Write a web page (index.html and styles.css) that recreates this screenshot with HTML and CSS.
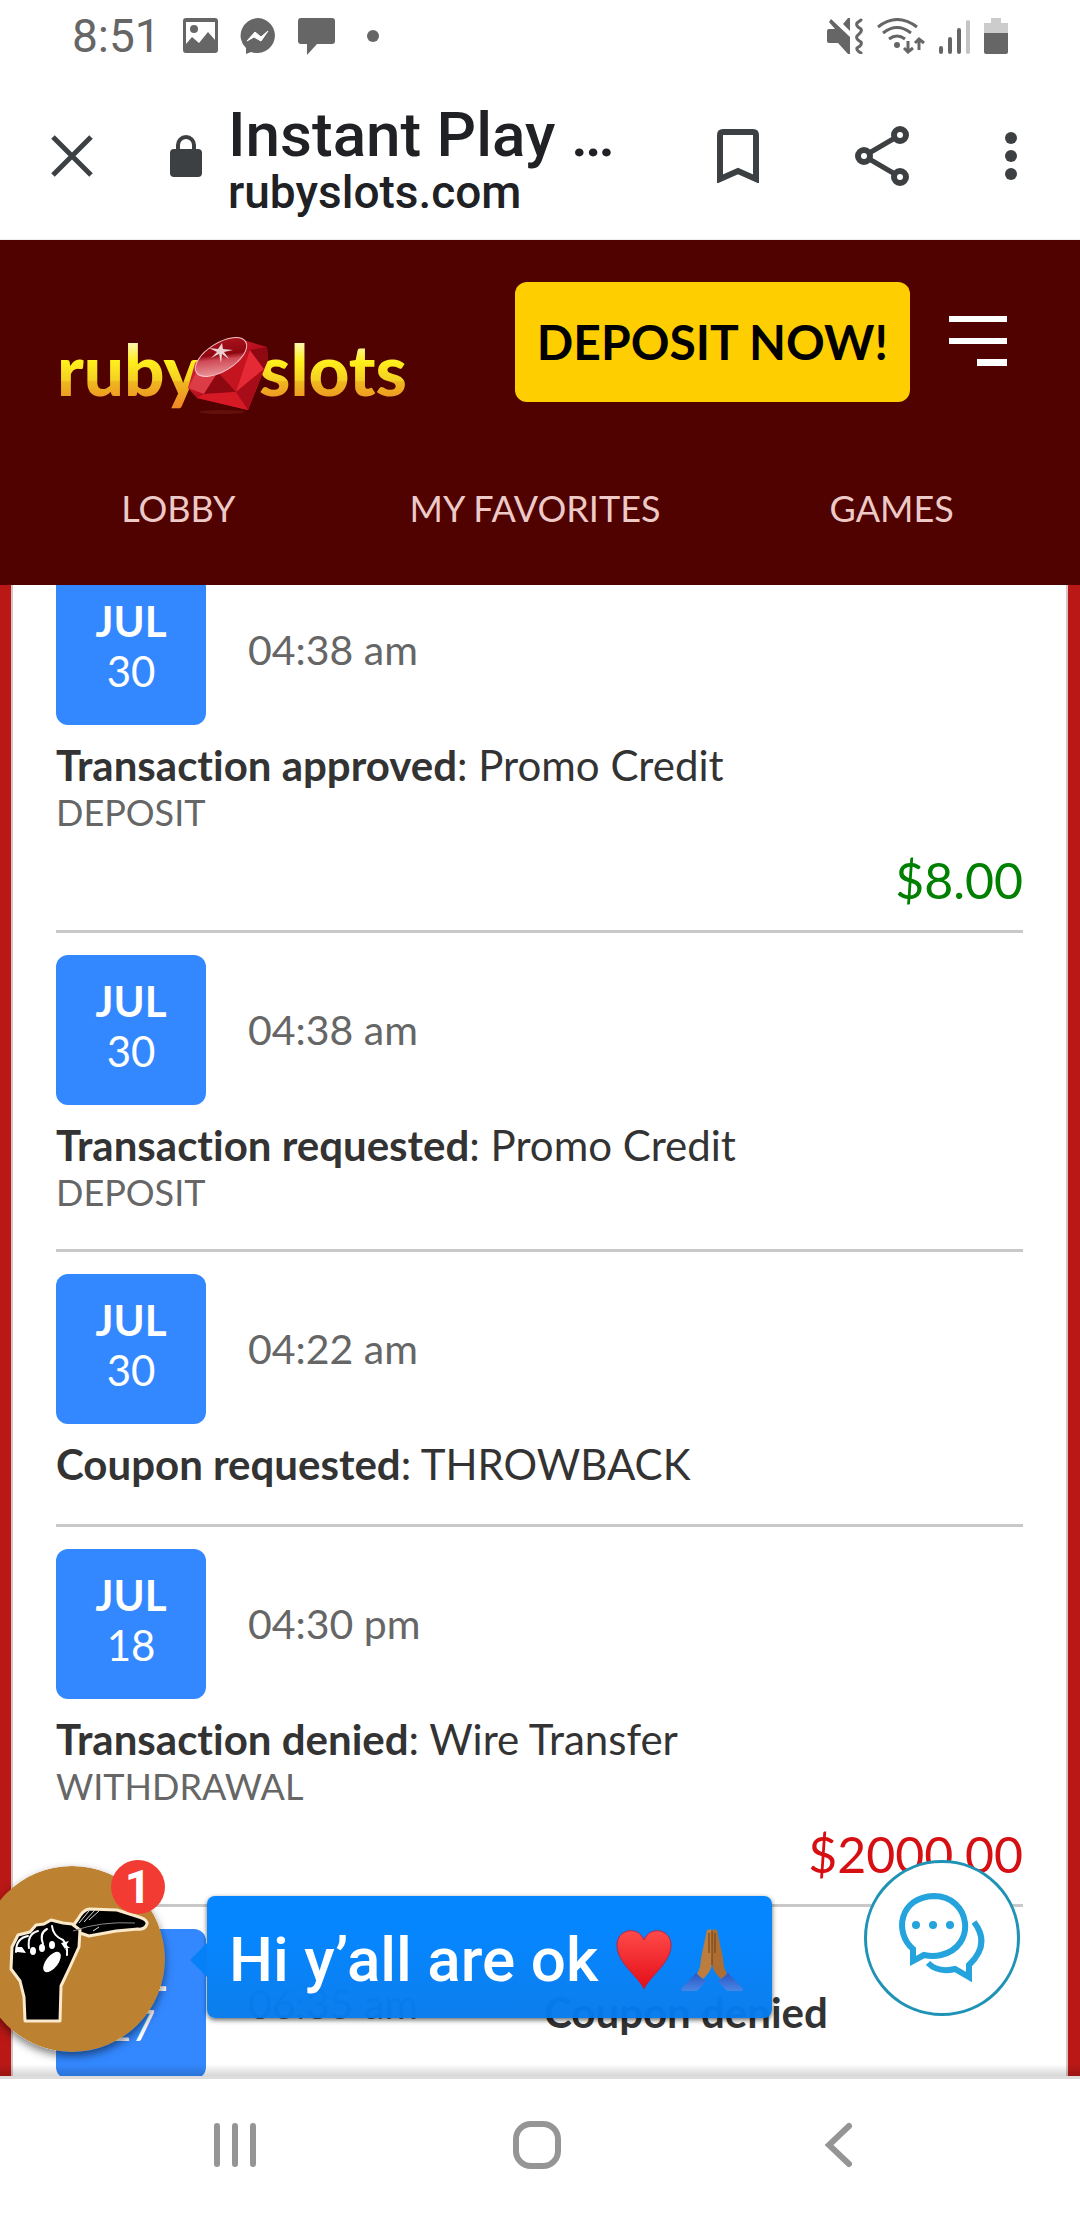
FILE: index.html
```html
<!DOCTYPE html>
<html lang="en">
<head>
    <meta charset="UTF-8">
    <meta name="viewport" content="width=device-width, initial-scale=1.0">
    <title>Instant Play</title>
    <link rel="stylesheet" href="styles.css">
</head>
<body>
    <!-- Status bar -->
    <div class="status-bar">
        <div class="status-left">
            <span class="clock">8:51</span>
            <svg width="35" height="36" viewBox="0 0 35 36">
                <path fill="#666" fill-rule="evenodd" d="M3 0h29a3 3 0 0 1 3 3v29a3 3 0 0 1-3 3H3a3 3 0 0 1-3-3V3a3 3 0 0 1 3-3zM3 4v22l6-7 7 6 9-11 7 8V4z"/>
                <circle cx="11" cy="11" r="4" fill="#666"/>
            </svg>
            <svg width="36" height="36" viewBox="0 0 36 36">
                <path fill="#666" d="M18 0a18 17.500 0 1 1-7 34l-5 2v-6A18 17.500 0 0 1 18 0z"/>
                <path fill="#fff" d="M7 23l8-9 6 5 7-6-7 10-7-4z" stroke="#fff" stroke-width="1"/>
            </svg>
            <svg width="37" height="38" viewBox="0 0 37 38">
                <path fill="#666" d="M3 1h31a3 3 0 0 1 3 3v20a3 3 0 0 1-3 3H19L9 38V27H3a3 3 0 0 1-3-3V4a3 3 0 0 1 3-3z"/>
            </svg>
            <svg width="32" height="12" viewBox="0 0 32 12"><circle cx="16" cy="6" r="6" fill="#666"/></svg>
        </div>
        <div class="status-right">
            <svg width="36" height="36" viewBox="0 0 36 36">
                <path fill="#666" d="M2 11h6L2 4l2-3 19 18v17h-2L11 25H2a2 2 0 0 1-2-2V13a2 2 0 0 1 2-2zM16 6l5-6h2v13z"/>
                <path fill="none" stroke="#666" stroke-width="3" stroke-linecap="round" stroke-linejoin="round" d="M34 2l-4 3q-1 2 1 4l3 2q1 2-1 4l-3 3q-1 2 1 4l3 2q1 2-1 4l-3 2q-1 2 4 5"/>
            </svg>
            <svg width="48" height="36" viewBox="0 0 48 36" fill="none" stroke="#666" stroke-width="3">
                <path d="M1 9Q20-6 40 9M6 15q14-11 28 0M12 21q8-6 16 0"/>
                <circle cx="20" cy="27" r="3" fill="#666" stroke="none"/>
                <path d="M31 23v11M27 30l4 4 5-4M42 32V21M38 25l4-4 5 4"/>
            </svg>
            <svg width="31" height="36" viewBox="0 0 31 36" stroke="#666" stroke-width="4" stroke-linecap="round">
                <path d="M2 30v4M11 21v13M20 12v22"/>
                <path stroke="#c4c4c4" d="M29 4v30"/>
            </svg>
            <svg width="24" height="36" viewBox="0 0 24 36">
                <path fill="#ccc" d="M7 0h10v5h7v11H0V5h7z"/>
                <path fill="#666" d="M0 15h24v19a2 2 0 0 1-2 2H2a2 2 0 0 1-2-2z"/>
            </svg>
        </div>
    </div>

    <!-- Browser toolbar -->
    <div class="toolbar">
        <button class="icon-btn" aria-label="Close">
            <svg width="42" height="42" viewBox="0 0 42 42"><path d="M2 2l38 38M40 2L2 40" stroke="#3c4043" stroke-width="5"/></svg>
        </button>
        <svg class="lock" width="32" height="42" viewBox="0 0 32 42">
            <rect y="14" width="32" height="28" rx="4" fill="#3c4043"/>
            <path d="M8 15v-5a8 8 0 0 1 16 0v5" fill="none" stroke="#3c4043" stroke-width="4"/>
        </svg>
        <div class="page-info">
            <div class="page-title">Instant Play …</div>
            <div class="page-url">rubyslots.com</div>
        </div>
        <button class="icon-btn" aria-label="Bookmark">
            <svg width="42" height="54" viewBox="0 0 42 54"><path d="M3 50V6q0-3 3-3h30q3 0 3 3v44l-18-8z" fill="none" stroke="#3c4043" stroke-width="6"/></svg>
        </button>
        <button class="icon-btn" aria-label="Share">
            <svg width="54" height="60" viewBox="0 0 54 60" fill="none" stroke="#3c4043">
                <path d="M45 9L9 30l36 21" stroke-width="5"/>
                <g fill="#fff" stroke-width="6"><circle cx="45" cy="9" r="6"/><circle cx="9" cy="30" r="6"/><circle cx="45" cy="51" r="6"/></g>
            </svg>
        </button>
        <button class="icon-btn" aria-label="More">
            <svg width="12" height="48" viewBox="0 0 12 48" fill="#3c4043"><circle cx="6" cy="6" r="6"/><circle cx="6" cy="24" r="6"/><circle cx="6" cy="42" r="6"/></svg>
        </button>
    </div>

    <!-- Site header -->
    <header class="site-header">
        <div class="header-top">
            <a href="#" class="logo" aria-label="ruby slots">
                <svg width="348" height="134" viewBox="0 0 348 134">
                    <defs>
                        <linearGradient id="gold" gradientUnits="userSpaceOnUse" x1="0" y1="60" x2="0" y2="124">
                            <stop offset="0" stop-color="#fff7b8"/>
                            <stop offset="0.300" stop-color="#fff01c"/>
                            <stop offset="0.600" stop-color="#f4cf23"/>
                            <stop offset="0.620" stop-color="#eeb81e"/>
                            <stop offset="1" stop-color="#f08a26"/>
                        </linearGradient>
                        <linearGradient id="gem" x1="0" y1="0" x2="1" y2="1">
                            <stop offset="0" stop-color="#d83a4b"/>
                            <stop offset="0.500" stop-color="#b80c1c"/>
                            <stop offset="1" stop-color="#e2202c"/>
                        </linearGradient>
                        <linearGradient id="table" x1="0" y1="1" x2="1" y2="0">
                            <stop offset="0" stop-color="#f4b6b6"/>
                            <stop offset="0.450" stop-color="#cf4a56"/>
                            <stop offset="0.550" stop-color="#8f0710"/>
                            <stop offset="1" stop-color="#b41822"/>
                        </linearGradient>
                    </defs>
                    <text class="logo-text" x="-3" y="114" fill="url(#gold)">ruby</text>
                    <text class="logo-text" x="199" y="114" fill="url(#gold)">slots</text>
                    <ellipse cx="162" cy="130" rx="23" ry="2" fill="#62100c"/>
                    <path d="M157 61l23-4 27 8 1 13-20 50-51-12-9-10 7-25z" fill="url(#gem)"/>
                    <path d="M136 91l22-1-14 22-16-6z" fill="#dc3c46"/>
                    <path d="M158 90l18 20-32 2z" fill="#8e0812"/>
                    <path d="M158 90l32-22-14 42z" fill="#c41420"/>
                    <path d="M190 68l14 19-28 23z" fill="#e52a35"/>
                    <path d="M190 68l17-3 1 13-4 9z" fill="#8e0912"/>
                    <path d="M176 110l12 18-51-12 7-4z" fill="#d51a26"/>
                    <path d="M176 110l28-23-16 41z" fill="#a80c18"/>
                    <ellipse cx="161" cy="75" rx="29" ry="14" fill="url(#table)" stroke="#f6c5c5" stroke-width="1" transform="rotate(-32 161 75)"/>
                    <path d="M162 61l1 6 10 1-9 2 5 7-7-5-1 9-2-9-8 4 6-6-8-4 9 1z" fill="#fff" fill-opacity="0.800"/>
                </svg>
            </a>
            <button class="deposit-btn">DEPOSIT NOW!</button>
            <button class="menu-btn" aria-label="Menu">
                <svg width="58" height="50" viewBox="0 0 58 50" fill="#fff"><path d="M0 0h58v6H0zM0 22h58v6H0zM28 43h30v7H28z"/></svg>
            </button>
        </div>
        <nav>
            <a href="#">LOBBY</a>
            <a href="#">MY FAVORITES</a>
            <a href="#">GAMES</a>
        </nav>
    </header>

    <!-- Transaction history -->
    <main class="content">
        <div class="history">
            <div class="item">
                <div class="item-head">
                    <div class="date"><b>JUL</b><span>30</span></div>
                    <span class="time">04:38 am</span>
                </div>
                <div class="item-text">
                    <p><b>Transaction approved</b>: Promo Credit</p>
                    <p class="type">DEPOSIT</p>
                </div>
                <div class="amount credit">$8.00</div>
            </div>
            <div class="item">
                <div class="item-head">
                    <div class="date"><b>JUL</b><span>30</span></div>
                    <span class="time">04:38 am</span>
                </div>
                <div class="item-text">
                    <p><b>Transaction requested</b>: Promo Credit</p>
                    <p class="type">DEPOSIT</p>
                </div>
            </div>
            <div class="item">
                <div class="item-head">
                    <div class="date"><b>JUL</b><span>30</span></div>
                    <span class="time">04:22 am</span>
                </div>
                <div class="item-text">
                    <p><b>Coupon requested</b>: THROWBACK</p>
                </div>
            </div>
            <div class="item">
                <div class="item-head">
                    <div class="date"><b>JUL</b><span>18</span></div>
                    <span class="time">04:30 pm</span>
                </div>
                <div class="item-text">
                    <p><b>Transaction denied</b>: Wire Transfer</p>
                    <p class="type">WITHDRAWAL</p>
                </div>
                <div class="amount debit">$2000.00</div>
            </div>
            <div class="item">
                <div class="item-head">
                    <div class="date"><b>JUL</b><span>27</span></div>
                    <span class="time">06:35 am</span>
                    <p class="inline-text"><b>Coupon denied</b></p>
                </div>
            </div>
        </div>
    </main>

    <!-- System navigation -->
    <div class="system-nav">
        <button class="icon-btn" aria-label="Recent apps">
            <svg width="48" height="48" viewBox="0 0 48 48" stroke="#959595" stroke-width="6" stroke-linecap="round"><path d="M6 5v38M24 5v38M42 5v38"/></svg>
        </button>
        <button class="icon-btn" aria-label="Home">
            <svg width="48" height="48" viewBox="0 0 48 48"><rect x="3" y="3" width="42" height="42" rx="15" fill="none" stroke="#959595" stroke-width="6"/></svg>
        </button>
        <button class="icon-btn" aria-label="Back">
            <svg width="48" height="48" viewBox="0 0 48 48"><path d="M34 5L14 24l20 19" fill="none" stroke="#959595" stroke-width="6" stroke-linecap="round"/></svg>
        </button>
    </div>

    <!-- Floating chat head with message -->
    <div class="chat-head">
        <svg class="avatar" width="186" height="186" viewBox="0 0 186 186">
            <circle cx="93" cy="93" r="93" fill="#bd8231"/>
            <g stroke="#fbe9cb" stroke-width="3" stroke-linejoin="round" fill="#000">
                <path d="M91 64l8-11q5-9 11-10l28 1 22 7q9 3 8 7-2 6-9 5l-22 2-27 5-12-4z"/>
                <path d="M46 155l-1-24-4-16-9-12 1-22 6-12 12-3 6-7 8-1 7-4 12 3 9 1 8 6-1 17-10 22-8 17-1 35z"/>
            </g>
            <path d="M94 65q28-10 62-8" fill="none" stroke="#888" stroke-width="1"/>
            <path d="M100 57l10-12M105 56l11-12M110 54l10-9M114 65l6-4" stroke="#ddd" stroke-width="1"/>
            <ellipse cx="73" cy="96" rx="6" ry="12" fill="#fff" transform="rotate(38 73 96)"/>
            <g fill="none" stroke="#fff" stroke-width="2" stroke-linecap="round">
                <path d="M37 86q0-14 12-16M50 82q-2-14 9-17M64 78q-4-11 4-15M73 60q1 10 11 14M84 74q5 6 4 15"/>
            </g>
            <g fill="#fff"><ellipse cx="54" cy="85" rx="3" ry="4"/><ellipse cx="63" cy="82" rx="3" ry="4"/><ellipse cx="73" cy="79" rx="3" ry="4"/><path d="M37 81h6l4 6-9-1zM82 77l8-2-3 4 4 3h-5l2 4z"/></g>
        </svg>
        <span class="badge">1</span>
    </div>
    <div class="chat-bubble">
        <span>Hi y’all are ok</span>
        <svg width="56" height="60" viewBox="0 0 56 60">
            <defs><linearGradient id="heart" x1="0" y1="0" x2="0" y2="1"><stop offset="0" stop-color="#ff4a4a"/><stop offset="1" stop-color="#e30d17"/></linearGradient></defs>
            <path d="M28 59C22 46 1 33 1 15 1-1 22-5 28 10 34-5 55-1 55 15 55 33 34 46 28 59z" fill="url(#heart)" stroke="#b3264a" stroke-width="1"/>
        </svg>
        <svg width="62" height="62" viewBox="0 0 62 62">
            <defs><linearGradient id="sleeve" x1="0" y1="0" x2="0" y2="1"><stop offset="0" stop-color="#2a56c4"/><stop offset="1" stop-color="#4a86e6"/></linearGradient></defs>
            <path d="M0 60l15-16 10 8-9 10H1zM62 60L47 44l-10 8 9 10h15z" fill="url(#sleeve)"/>
            <path d="M26 1q4-2 5 1v32q0 8-9 16l-6-5q4-7 4-16z" fill="#bd7d3e"/>
            <path d="M36 1q-4-2-5 1v32q0 8 9 16l6-5q-4-7-4-16z" fill="#ac6e33"/>
            <path d="M31 2v34M28 4v20M34 4v20" stroke="#6b3d18" stroke-width="1"/>
        </svg>
    </div>

    <button class="support-btn" aria-label="Live chat">
        <svg width="88" height="90" viewBox="0 0 88 90" fill="none" stroke="#24a3dc" stroke-width="6">
            <path d="M15 56C-4 40 1 4 36 3c36 0 44 50 7 59q-8 2-17 0l-11 6z"/>
            <path d="M76 29q17 22-5 43v12l-14-8q-17 4-27-6"/>
            <g fill="#24a3dc" stroke="none"><circle cx="18" cy="32" r="4"/><circle cx="35" cy="32" r="4"/><circle cx="52" cy="32" r="4"/></g>
        </svg>
    </button>
</body>
</html>
```
FILE: styles.css
```css
* {
    box-sizing: border-box;
}

body {
    font-family: Lato, sans-serif;
    font-variant-ligatures: none;
    margin: 0;
    height: 100vh;
    display: flex;
    flex-direction: column;
    position: relative;
    overflow: hidden;
    background-color: #fff;
    color: #333;
}

svg {
    display: block;
    flex-shrink: 0;
}

p {
    margin: 0;
}

button {
    font-family: inherit;
    border: none;
    background: none;
    padding: 0;
    cursor: pointer;
}

.status-bar {
    display: flex;
    justify-content: space-between;
    align-items: center;
    height: 72px;
    padding: 0 72px;
    font-family: Roboto, sans-serif;
    color: #666;
}

.status-left {
    display: flex;
    align-items: center;
    gap: 22px;
}

.status-right {
    display: flex;
    align-items: center;
    gap: 14px;
}

.clock {
    font-size: 46px;
    line-height: 52px;
}

.toolbar {
    display: flex;
    align-items: center;
    height: 168px;
    padding: 0 63px 0 51px;
    gap: 96px;
    border-bottom: 1px solid #eee;
    font-family: Roboto, sans-serif;
    font-weight: 500;
    color: #202124;
}

.lock {
    margin-left: -19px;
}

.page-info {
    flex: 1;
    margin-left: -70px;
    padding-top: 8px;
    white-space: nowrap;
}

.page-title {
    font-size: 62px;
    line-height: 64px;
}

.page-url {
    font-size: 46px;
    line-height: 50px;
}

.site-header {
    background-color: #4f0200;
    padding-top: 42px;
    position: relative;
    z-index: 1;
}

.header-top {
    display: flex;
    align-items: flex-start;
    padding: 0 73px 0 60px;
}

.logo {
    margin-right: auto;
}

.logo-text {
    font-family: Lato, sans-serif;
    font-weight: 900;
    font-size: 71px;
}

.deposit-btn {
    background-color: #ffce00;
    color: #000;
    font-size: 48px;
    font-weight: bold;
    line-height: 60px;
    padding: 30px 22px;
    border-radius: 12px;
    margin-right: 39px;
}

.menu-btn {
    padding-top: 34px;
}

nav {
    display: grid;
    grid-template-columns: repeat(3, 1fr);
    padding: 70px 10px 55px 0;
}

nav a {
    color: #edc9c7;
    text-decoration: none;
    text-align: center;
    font-size: 36px;
    line-height: 44px;
}

.content {
    flex: 1;
    min-height: 0;
    overflow: hidden;
    position: relative;
    background-color: #b91816;
    padding: 0 12px 0 11px;
}

.content::after {
    content: "";
    position: absolute;
    left: 0;
    right: 0;
    bottom: 0;
    height: 12px;
    background: linear-gradient(rgba(0, 0, 0, 0), rgba(0, 0, 0, 0.16));
}

/* list is scrolled a little under the header */
.history {
    background-color: #fff;
    border: 2px solid #d9c4c4;
    border-width: 0 2px;
    padding: 0 43px;
    margin-top: -10px;
}

.item {
    border-bottom: 3px solid #c8c8c8;
    padding-bottom: 21px;
    margin-bottom: 22px;
    font-size: 42px;
    line-height: 50px;
}

.item-head {
    display: flex;
    align-items: center;
    gap: 42px;
}

.date {
    width: 150px;
    height: 150px;
    padding-top: 21px;
    border-radius: 12px;
    background-color: #3388ff;
    color: #fff;
    text-align: center;
}

.date b,
.date span {
    display: block;
}

.time {
    font-size: 41px;
    color: #666;
}

.item-text {
    padding: 15px 0 14px;
}

.inline-text {
    padding-top: 15px;
    margin-left: 84px;
}

.type {
    font-size: 36px;
    line-height: 44px;
    color: #666;
}

.amount {
    font-size: 50px;
    line-height: 61px;
    padding-top: 2px;
    margin-bottom: -2px;
    text-align: right;
}

.credit {
    color: #008000;
}

.debit {
    color: #d50f12;
}

.system-nav {
    display: flex;
    justify-content: center;
    align-items: center;
    gap: 254px;
    height: 144px;
    padding: 0 6px 9px 0;
    border-top: 3px solid #dcdcdc;
}

.chat-head {
    position: absolute;
    left: -21px;
    bottom: 168px;
    z-index: 2;
}

.avatar {
    border-radius: 50%;
    box-shadow: 0 4px 8px rgba(0, 0, 0, 0.5);
}

.badge {
    position: absolute;
    top: -6px;
    right: 0;
    width: 54px;
    height: 54px;
    border-radius: 50%;
    background-color: #f23c33;
    color: #fff;
    font-family: Roboto, sans-serif;
    font-weight: bold;
    font-size: 46px;
    line-height: 54px;
    text-align: center;
}

.chat-bubble {
    position: absolute;
    left: 207px;
    bottom: 202px;
    z-index: 2;
    display: flex;
    align-items: center;
    height: 122px;
    padding: 5px 29px 0 22px;
    border-radius: 8px;
    background: linear-gradient(#0586ff 30%, rgba(5, 122, 236, 0.97));
    box-shadow: 0 2px 5px rgba(0, 0, 0, 0.6);
    color: #fff;
    font-family: Roboto, sans-serif;
    font-weight: 500;
    font-size: 62px;
    white-space: nowrap;
}

.chat-bubble::before {
    content: "";
    position: absolute;
    left: -17px;
    top: 47px;
    border: 17px solid transparent;
    border-left: none;
    border-right-color: #0580f6;
}

.chat-bubble svg {
    margin-left: 18px;
}

.chat-bubble svg + svg {
    margin-left: 9px;
}

.support-btn {
    position: absolute;
    right: 60px;
    bottom: 204px;
    width: 156px;
    height: 156px;
    border: 3px solid #1f93b5;
    border-radius: 50%;
    background-color: #fff;
    display: flex;
    justify-content: center;
    align-items: center;
}
```
